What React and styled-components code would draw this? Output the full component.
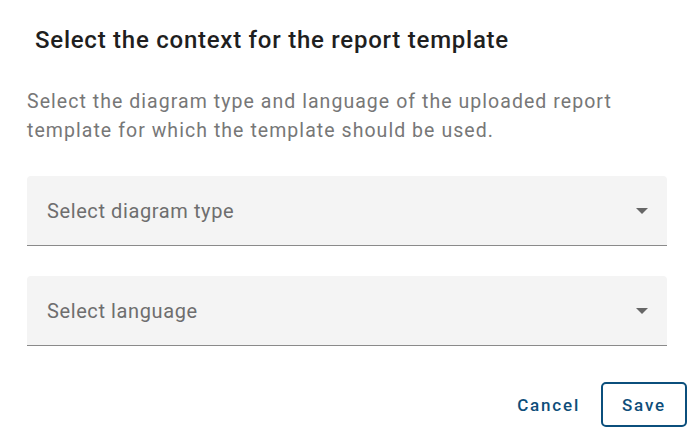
import React from "react";
import styled, { createGlobalStyle } from "styled-components";

const Global = createGlobalStyle`
  html, body { margin: 0; padding: 0; background: #fff; }
  body { font-family: Roboto, "Noto Sans", sans-serif; }
`;

const Dialog = styled.div`
  width: 694px;
  height: 433px;
  box-sizing: border-box;
  padding: 25px 7px 0 27px;
  display: flex;
  flex-direction: column;
`;

const Title = styled.h2`
  margin: 0 0 0 8px;
  font-size: 24px;
  font-weight: 500;
  line-height: 30px;
  color: #1f1f1f;
  letter-spacing: 0.75px;
`;

const Description = styled.p`
  margin: 32px 0 0 0;
  font-size: 19.5px;
  font-weight: 400;
  line-height: 29px;
  color: #777;
  letter-spacing: 1.05px;
  max-width: 640px;
`;

const Fields = styled.div`
  display: flex;
  flex-direction: column;
  gap: 30px;
  margin-top: 31px;
  width: 640px;
`;

const SelectField = styled.div`
  height: 70px;
  box-sizing: border-box;
  background: #f4f4f4;
  border-radius: 4px 4px 0 0;
  border-bottom: 1px solid #8a8a8a;
  display: flex;
  align-items: center;
  justify-content: space-between;
  padding: 0 19px 0 20px;
`;

const Placeholder = styled.span`
  font-size: 20px;
  font-stretch: 90%;
  color: #6e6e6e;
  letter-spacing: 0.6px;
`;

const Arrow = styled.span`
  width: 0;
  height: 0;
  border-left: 6px solid transparent;
  border-right: 6px solid transparent;
  border-top: 6px solid #666;
`;

const Actions = styled.div`
  display: flex;
  justify-content: flex-end;
  align-items: center;
  gap: 14px;
  margin-top: 36px;
`;

const Button = styled.button`
  height: 45px;
  box-sizing: border-box;
  font-family: Roboto, sans-serif;
  font-size: 17px;
  font-weight: 500;
  letter-spacing: 1.8px;
  color: #0e4e7a;
  background: transparent;
  border-radius: 5px;
  cursor: pointer;
  border: ${(p) => (p.$outlined ? "2px solid #0b4f7c" : "none")};
  padding: ${(p) => (p.$outlined ? "0 19px" : "0 8px")};
  margin-right: ${(p) => (p.$outlined ? "0" : "-1px")};
`;

export default function App() {
  return (
    <>
      <Global />
      <Dialog>
        <Title>Select the context for the report template</Title>
        <Description>
          Select the diagram type and language of the uploaded report template
          for which the template should be used.
        </Description>
        <Fields>
          <SelectField>
            <Placeholder>Select diagram type</Placeholder>
            <Arrow />
          </SelectField>
          <SelectField>
            <Placeholder>Select language</Placeholder>
            <Arrow />
          </SelectField>
        </Fields>
        <Actions>
          <Button>Cancel</Button>
          <Button $outlined>Save</Button>
        </Actions>
      </Dialog>
    </>
  );
}
